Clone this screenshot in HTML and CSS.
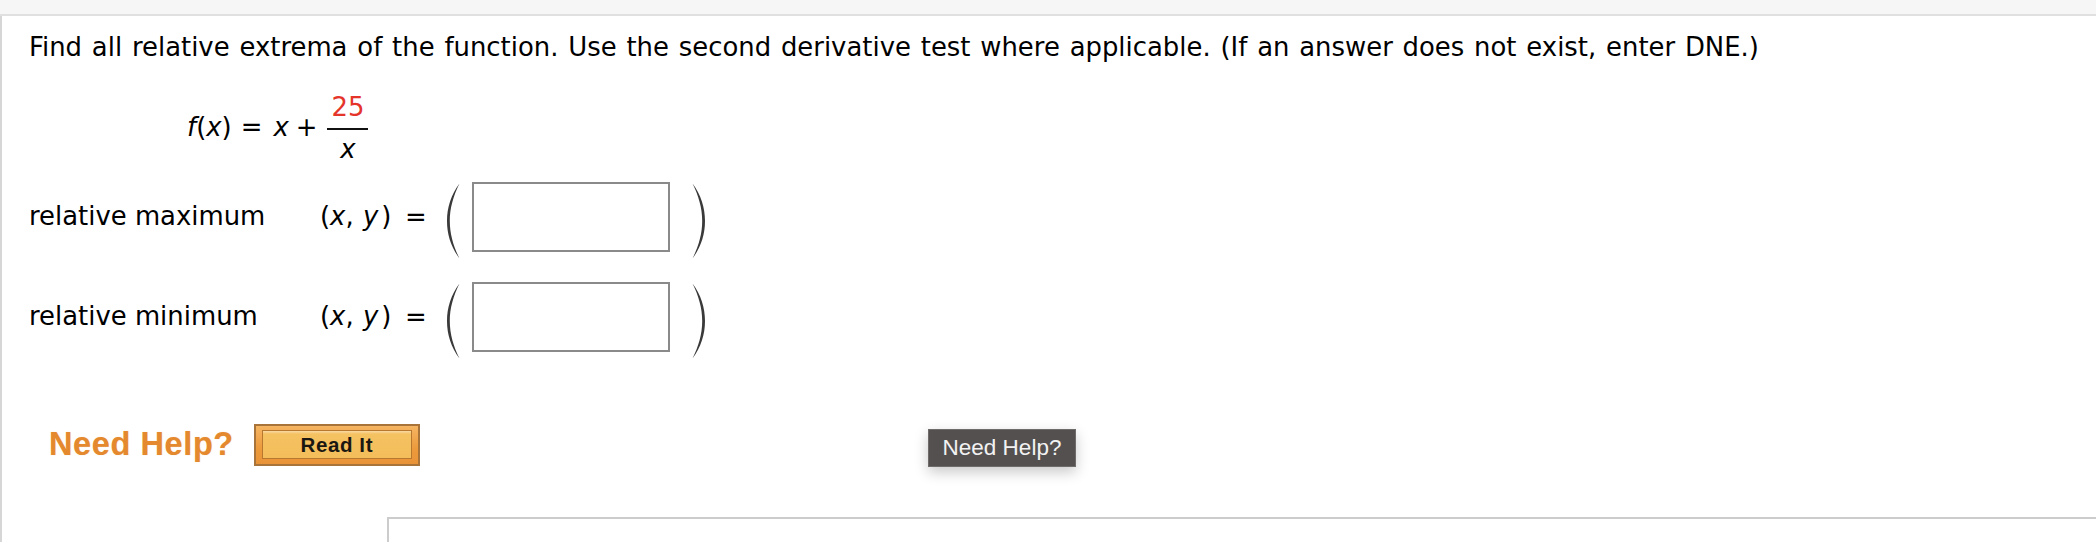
FILE: index.html
```html
<!DOCTYPE html>
<html lang="en">
<head>
<meta charset="utf-8">
<title>Relative extrema</title>
<link rel="stylesheet" href="styles.css">
</head>
<body>
<div class="topbar"></div>
<div class="panel">
  <p class="prompt">Find all relative extrema of the function. Use the second derivative test where applicable. (If an answer does not exist, enter DNE.)</p>

  <div class="equation">
    <span class="txt"><i>f</i>(<i>x</i>)</span>
    <span class="txt op eq-op">=</span>
    <span class="txt"><i>x</i></span>
    <span class="txt op plus-op">+</span>
    <span class="frac">
      <span class="num">25</span>
      <span class="den"><i>x</i></span>
    </span>
  </div>

  <div class="answers">
    <div class="row">
      <span class="label">relative maximum</span>
      <span class="coord">(<i>x</i>, <i class="yv">y</i>)</span>
      <span class="equals">=</span>
      <svg class="paren" viewBox="0 0 16 76" aria-hidden="true"><path d="M14.5 0.5 C6 12 2 24.5 2 38 C2 51.5 6 64 14.5 75.5 C8.5 63.5 4.8 51 4.8 38 C4.8 25 8.5 12.5 14.5 0.5 Z"/></svg>
      <span class="box"></span>
      <svg class="paren right" viewBox="0 0 16 76" aria-hidden="true"><path d="M14.5 0.5 C6 12 2 24.5 2 38 C2 51.5 6 64 14.5 75.5 C8.5 63.5 4.8 51 4.8 38 C4.8 25 8.5 12.5 14.5 0.5 Z"/></svg>
    </div>
    <div class="row">
      <span class="label">relative minimum</span>
      <span class="coord">(<i>x</i>, <i class="yv">y</i>)</span>
      <span class="equals">=</span>
      <svg class="paren" viewBox="0 0 16 76" aria-hidden="true"><path d="M14.5 0.5 C6 12 2 24.5 2 38 C2 51.5 6 64 14.5 75.5 C8.5 63.5 4.8 51 4.8 38 C4.8 25 8.5 12.5 14.5 0.5 Z"/></svg>
      <span class="box"></span>
      <svg class="paren right" viewBox="0 0 16 76" aria-hidden="true"><path d="M14.5 0.5 C6 12 2 24.5 2 38 C2 51.5 6 64 14.5 75.5 C8.5 63.5 4.8 51 4.8 38 C4.8 25 8.5 12.5 14.5 0.5 Z"/></svg>
    </div>
  </div>

  <div class="help">
    <span class="need-help">Need Help?</span>
    <span class="read-it"><span class="read-it-inner">Read It</span></span>
  </div>

  <div class="tooltip">Need Help?</div>

  <div class="lower"></div>
</div>
</body>
</html>
```

FILE: styles.css
```css
html, body {
  margin: 0;
  padding: 0;
  background: #ffffff;
  overflow: hidden;
}

body {
  font-family: "DejaVu Sans", Verdana, sans-serif;
  font-size: 25.9px;
  color: #000;
}

.topbar {
  height: 14px;
  background: #f6f6f6;
  border-bottom: 2px solid #e0e0e0;
}

.panel {
  position: relative;
  min-height: 526px;
  border-left: 2px solid #d6d6d6;
  padding: 16px 0 0 27px;
  box-sizing: border-box;
}

.prompt {
  margin: 0;
  line-height: 30px;
  word-spacing: 1.6px;
  white-space: nowrap;
}

/* equation */
.equation {
  display: flex;
  align-items: center;
  margin: 31px 0 0 158px;
  height: 67px;
}

.txt {
  line-height: 30px;
}

i {
  font-style: italic;
}

.eq-op {
  margin: 0 11px 0 9px;
}

.plus-op {
  margin: 0 0 0 7px;
}

.frac {
  display: flex;
  flex-direction: column;
  align-items: center;
  margin-left: 10px;
  margin-top: 2px;
}

.num {
  color: #e5352b;
  line-height: 26px;
  padding: 0 4px 8px;
  border-bottom: 2px solid #111;
}

.den {
  line-height: 26px;
  margin-top: 6px;
}

/* answer rows */
.answers {
  margin-top: 22px;
  display: flex;
  flex-direction: column;
  gap: 23px;
}

.row {
  display: flex;
  align-items: flex-start;
  height: 77px;
}

.label,
.coord,
.equals {
  line-height: 30px;
  margin-top: 19px;
  white-space: nowrap;
}

.label {
  width: 291px;
}

.coord {
  width: 85px;
}

.coord .yv {
  margin: 0 3px 0 1px;
}

.equals {
  width: 22px;
  margin-right: 18px;
  margin-top: 20px;
}

.paren {
  width: 16px;
  height: 76px;
  margin-top: 1px;
  fill: #3a3a3a;
  flex: none;
}

.paren.right {
  transform: scaleX(-1);
  margin-left: 21px;
}

.box {
  width: 198px;
  height: 70px;
  box-sizing: border-box;
  border: 2px solid #8a8a8a;
  margin-left: 11px;
  background: #fff;
}

/* help row */
.help {
  display: flex;
  align-items: center;
  margin: 65px 0 0 20px;
  height: 42px;
}

.need-help {
  font-family: "Liberation Sans", Arial, sans-serif;
  font-weight: bold;
  font-size: 32.5px;
  letter-spacing: 0.6px;
  line-height: 32px;
  color: #e5892e;
  text-shadow: 0 0 1px rgba(229, 137, 46, 0.45);
  margin-bottom: 3px;
}

.read-it {
  margin-left: 20px;
  width: 166px;
  height: 42px;
  box-sizing: border-box;
  border: 2px solid #a9743a;
  background: linear-gradient(#f6b562, #ec9a3c 60%, #e99338);
  padding: 4px 6px 5px 6px;
  display: flex;
}

.read-it-inner {
  flex: 1;
  border: 1px solid #b9782f;
  background: linear-gradient(#f8d9a4 0, #f5c262 3px, #f3bd5a 100%);
  font-family: "Liberation Sans", Arial, sans-serif;
  font-weight: bold;
  font-size: 20.5px;
  letter-spacing: 0.6px;
  color: #1a1712;
  display: flex;
  align-items: center;
  justify-content: center;
  padding-top: 1px;
}

/* tooltip overlay */
.tooltip {
  position: absolute;
  left: 926px;
  top: 413px;
  width: 148px;
  height: 38px;
  box-sizing: border-box;
  background: #545050;
  border: 1px solid #6e6b6a;
  color: #f2f2f2;
  font-family: "Liberation Sans", Arial, sans-serif;
  font-size: 22.5px;
  line-height: 36px;
  text-align: center;
  box-shadow: 0 5px 14px rgba(0, 0, 0, 0.22);
}

/* lower answer area */
.lower {
  margin: 51px 0 0 358px;
  height: 40px;
  border-top: 2px solid #cccccc;
  border-left: 2px solid #cccccc;
}
```
